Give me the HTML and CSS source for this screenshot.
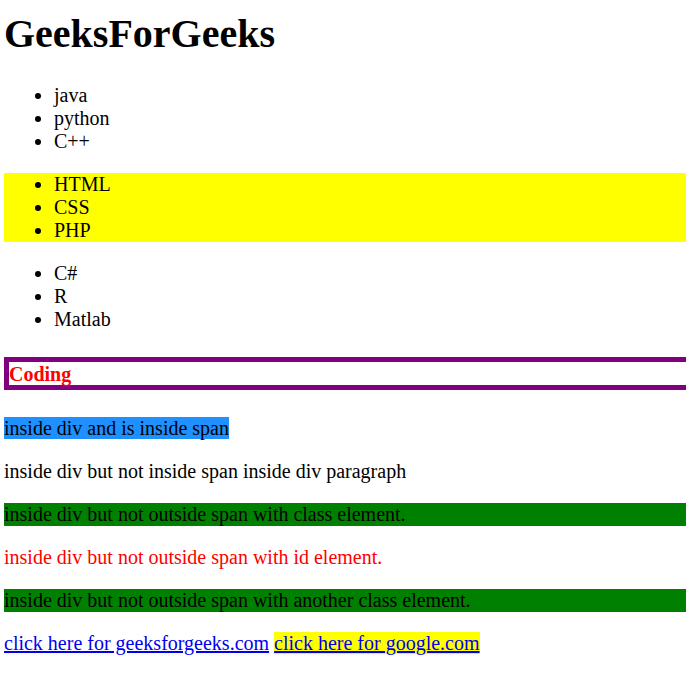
FILE: index.html
```html
<!DOCTYPE html>
<html>
<head>
<meta charset="utf-8">
<title>GeeksForGeeks</title>
<link rel="stylesheet" href="styles.css">
</head>
<body>
<h1 class="title">GeeksForGeeks</h1>
<ul class="list">
  <li>java</li>
  <li>python</li>
  <li>C++</li>
</ul>
<ul class="list list-yellow">
  <li>HTML</li>
  <li>CSS</li>
  <li>PHP</li>
</ul>
<ul class="list">
  <li>C#</li>
  <li>R</li>
  <li>Matlab</li>
</ul>
<h4 class="coding">Coding</h4>
<div class="box">
  <p class="para"><span class="span-blue">inside div and is inside span</span></p>
  <p class="para">inside div but not inside span inside div paragraph</p>
  <p class="para para-green">inside div but not outside span with class element.</p>
  <p class="para para-red">inside div but not outside span with id element.</p>
  <p class="para para-green">inside div but not outside span with another class element.</p>
</div>
<p class="para"><a class="link" href="#">click here for geeksforgeeks.com</a> <a class="link link-yellow" href="#">click here for google.com</a></p>
</body>
</html>
```
FILE: styles.css
```css
html {
  background: #ffffff;
  overflow-x: hidden;
}
body {
  margin: 0 -40px 0 4px;
  font-family: "Liberation Serif", "Times New Roman", serif;
  font-size: 20px;
  color: #000000;
}
.title {
  font-size: 40px;
  font-weight: bold;
  margin: 10px 0 26.8px;
}
.list {
  margin: 20px 0;
  padding-left: 50px;
}
.list-yellow {
  background: #ffff00;
}
.coding {
  font-size: 20px;
  font-weight: bold;
  color: #ff0000;
  border: 5px solid #800080;
  margin: 26.6px 0;
  padding-top: 1px;
  height: 22px;
}
.box {
  margin: 0;
}
.para {
  margin: 20px 0;
}
.span-blue {
  background: #1e90ff;
}
.para-green {
  background: #008000;
}
.para-red {
  color: #ff0000;
}
.link {
  color: #0000ee;
  text-decoration-thickness: 2px;
}
.link-yellow {
  background: #ffff00;
}
```
